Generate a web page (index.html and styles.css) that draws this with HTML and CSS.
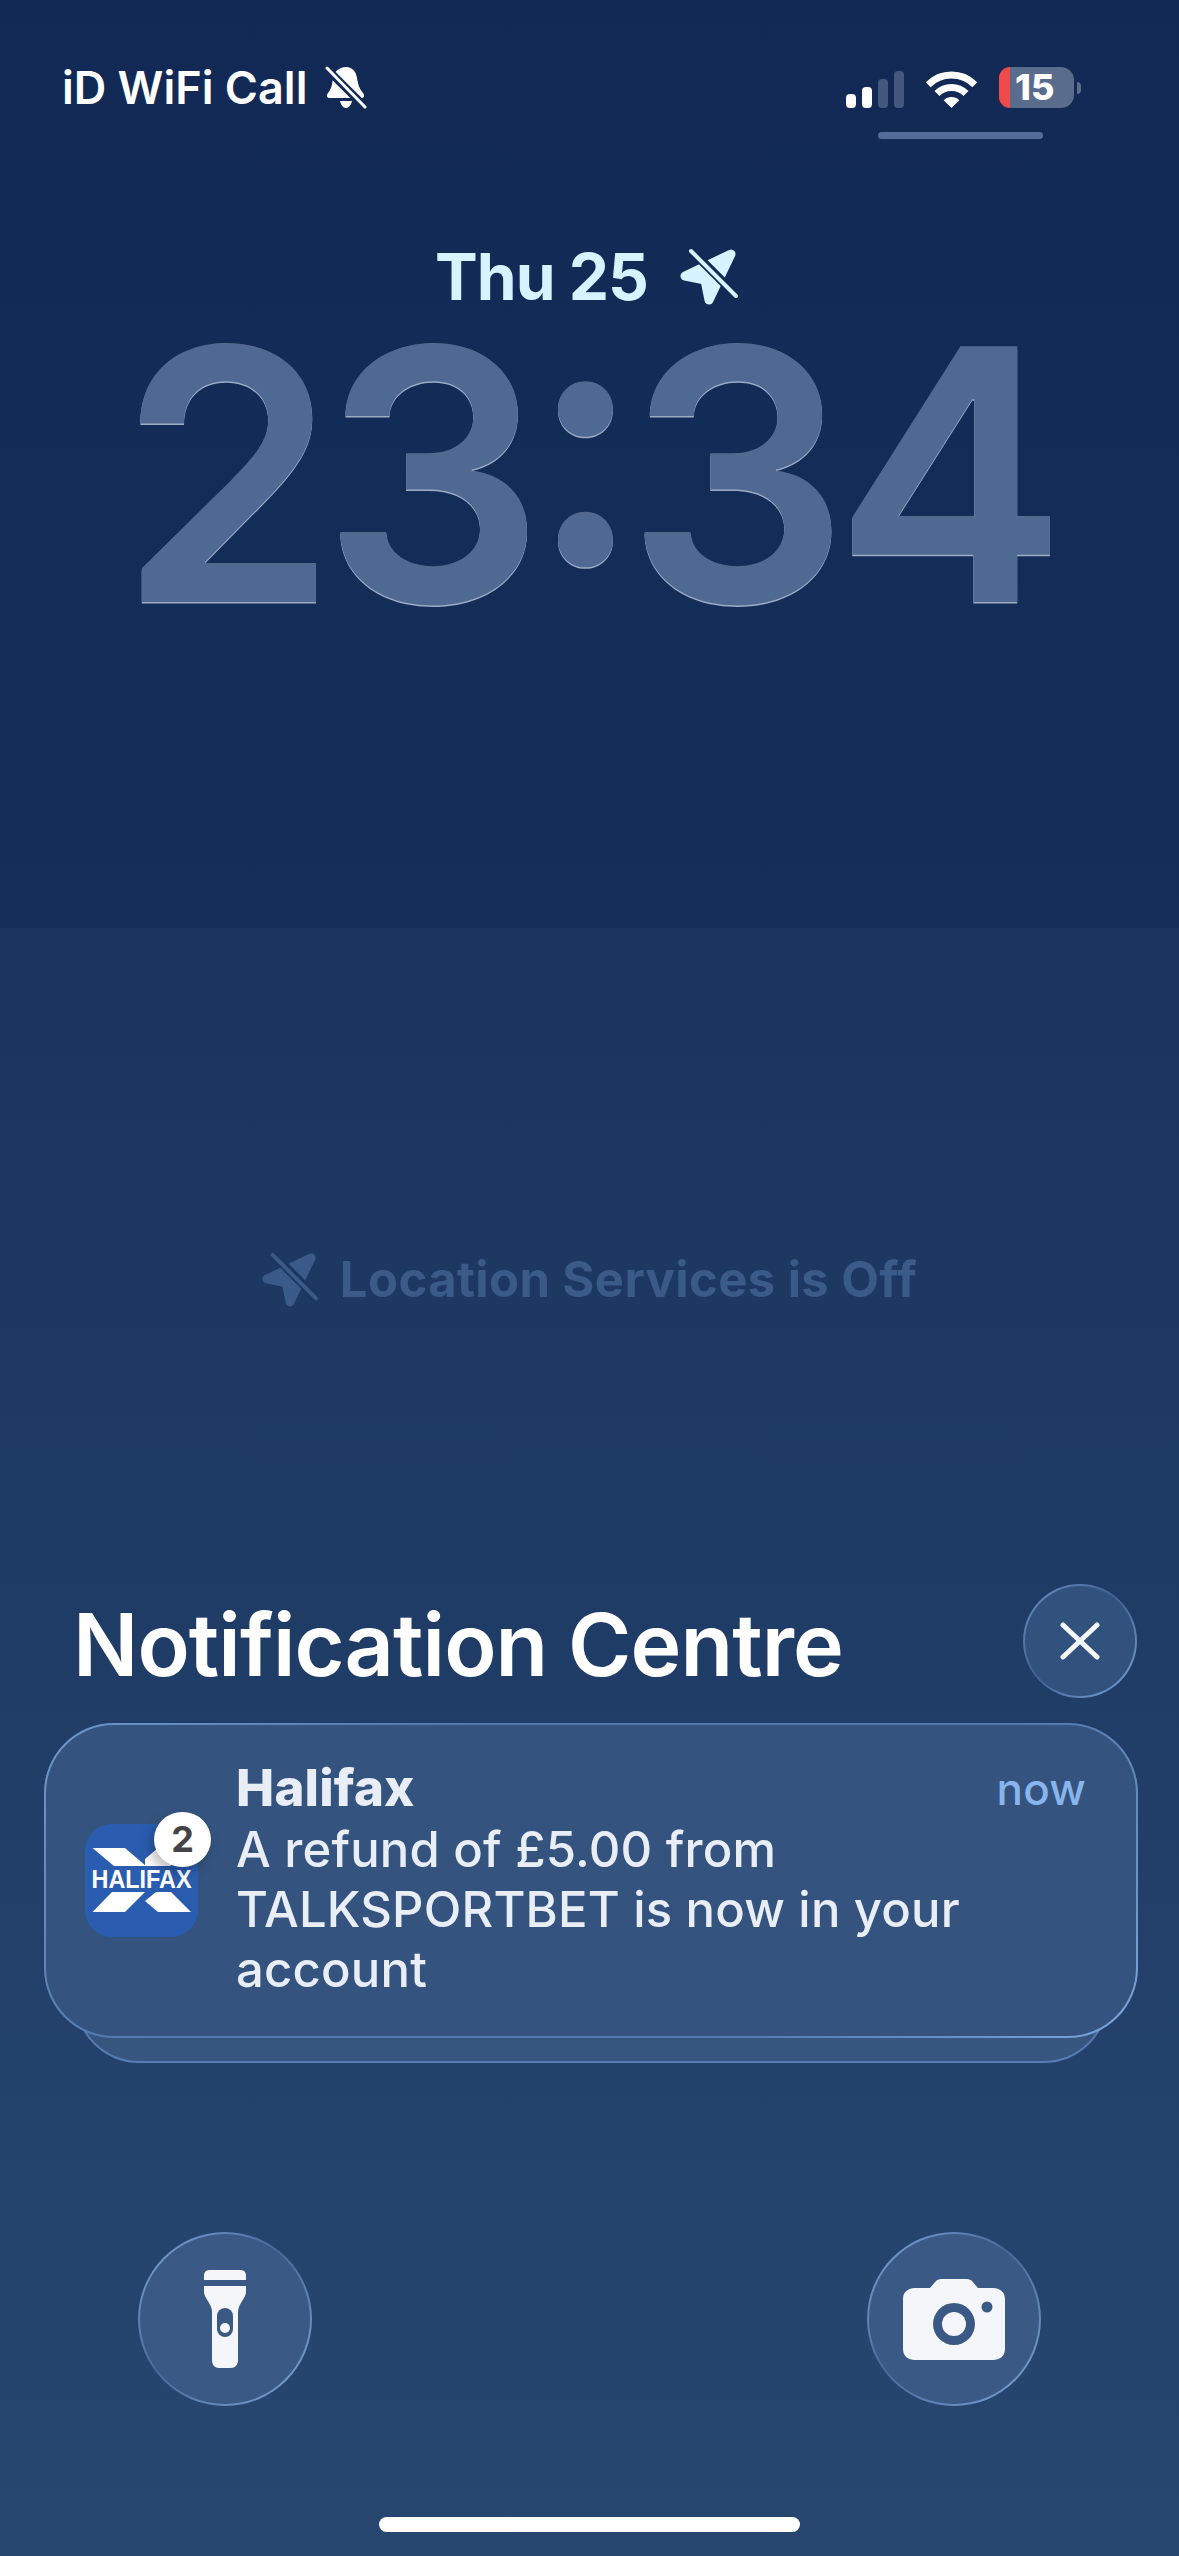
FILE: index.html
```html
<!DOCTYPE html>
<html lang="en">
<head>
  <meta charset="UTF-8" />
  <meta name="viewport" content="width=device-width, initial-scale=1.0"/>
  <title>Lock Screen</title>
  <link rel="stylesheet" href="styles.css">
</head>
<body>
  <main class="screen">

    <header class="status-bar">
      <div class="carrier">
        <span>iD WiFi Call</span>
        <svg class="bell-icon" viewBox="0 0 42 43">
          <path class="glyph" d="M21 1c6 0 10 4 11 11 1 6 2 10 6 15 2 3 1 5-2 5H5c-3 0-4-2-2-5 4-5 4-9 5-15C9 5 15 1 21 1z"/>
          <path class="glyph" d="M15 35h12c-1 4-3 7-6 7s-5-3-6-7z"/>
          <line class="cut" x1="1" y1="2" x2="41" y2="42"/>
          <line class="slash" x1="2" y1="2" x2="40" y2="41"/>
        </svg>
      </div>
      <div class="status-icons">
        <div class="signal">
          <i class="bar bar-1"></i>
          <i class="bar bar-2"></i>
          <i class="bar bar-3 off"></i>
          <i class="bar bar-4 off"></i>
        </div>
        <svg class="wifi-icon" viewBox="0 0 51 37">
          <path d="M2.2 13.7A33 33 0 0 1 48.8 13.7" fill="none" stroke="#fff" stroke-width="7"/>
          <path d="M11 22.5A20.5 20.5 0 0 1 40 22.5" fill="none" stroke="#fff" stroke-width="7"/>
          <path d="M25.5 37L17.7 29.2A11 11 0 0 1 33.3 29.2Z" fill="#fff"/>
        </svg>
        <div class="battery">
          <div class="battery-body">
            <i class="battery-level"></i>
            <span>15</span>
          </div>
          <i class="battery-cap"></i>
        </div>
      </div>
    </header>
    <div class="status-pill"></div>

    <div class="date-row">
      <span>Thu 25</span>
      <svg class="arrow-icon" viewBox="0 0 58 58">
        <path class="arrow-fill" d="M51 6L5 28 25 32 29 52Z"/>
        <line class="arrow-cut" x1="6" y1="-3" x2="62" y2="53"/>
        <line class="arrow-slash" x1="11" y1="3" x2="56" y2="48"/>
      </svg>
    </div>
    <div class="clock">23:34</div>

    <div class="location-row">
      <svg class="arrow-icon small" viewBox="0 0 58 58">
        <path class="arrow-fill" d="M51 6L5 28 25 32 29 52Z"/>
        <line class="arrow-cut" x1="6" y1="-3" x2="62" y2="53"/>
        <line class="arrow-slash" x1="11" y1="3" x2="56" y2="48"/>
      </svg>
      <span>Location Services is Off</span>
    </div>

    <div class="centre-header">
      <h1>Notification Centre</h1>
      <div class="close-btn">
        <svg viewBox="0 0 40 38">
          <path d="M3 3L37 35M37 3L3 35" fill="none" stroke="#f5f7fa" stroke-width="5" stroke-linecap="round"/>
        </svg>
      </div>
    </div>

    <section class="stack">
      <div class="card-behind"></div>
      <div class="card">
        <div class="app-icon">
          <svg viewBox="0 0 113 113">
            <rect width="113" height="113" rx="27" fill="#2a5db0"/>
            <path d="M7.5 24H40L61 42H29Z" fill="#fff"/>
            <path d="M73 24H106L85 42H60L60 35Z" fill="#fff"/>
            <path d="M27 68H60L40 88H7.5Z" fill="#fff"/>
            <path d="M71 68H86L106 88H73L60 77Z" fill="#fff"/>
            <text class="logo-text" x="56.5" y="64" text-anchor="middle" textLength="100" lengthAdjust="spacingAndGlyphs">HALIFAX</text>
          </svg>
          <span class="badge">2</span>
        </div>
        <div class="card-text">
          <div class="card-head">
            <strong>Halifax</strong>
            <span class="card-time">now</span>
          </div>
          <p>A refund of £5.00 from TALKSPORTBET is now in your account</p>
        </div>
      </div>
    </section>

    <div class="actions">
      <div class="round-btn">
        <svg class="torch-icon" viewBox="0 0 42 98">
          <path class="glyph-soft" d="M0 10V6C0 2 2 0 6 0H36C40 0 42 2 42 6V10Z"/>
          <path class="glyph-soft" d="M0 16H42V22C42 28 34 34 34 42V90C34 95 31 98 27 98H15C11 98 8 95 8 90V42C8 34 0 28 0 22Z"/>
          <rect x="13" y="38" width="16" height="29" rx="8" fill="#3a5a85"/>
          <circle cx="21" cy="58" r="5" fill="#f4f6f9"/>
        </svg>
      </div>
      <div class="round-btn">
        <svg class="camera-icon" viewBox="0 0 102 81">
          <path class="glyph-soft" d="M12 9H27L33 2C34 1 36 0 38 0H64C66 0 68 1 69 2L75 9H90C97 9 102 13 102 20V70C102 77 97 81 90 81H12C5 81 0 77 0 70V20C0 13 5 9 12 9Z"/>
          <circle cx="51" cy="45" r="21" fill="#3a5a85"/>
          <circle cx="51" cy="45" r="12" fill="#f4f6f9"/>
          <circle cx="84" cy="28" r="5.5" fill="#3a5a85"/>
        </svg>
      </div>
    </div>

    <div class="home-bar"></div>
  </main>
</body>
</html>
```

FILE: styles.css
```css
* {
  box-sizing: border-box;
}

body {
  margin: 0;
  font-family: "Inter", "Noto Sans", sans-serif;
}

.screen {
  width: 1179px;
  height: 2556px;
  overflow: hidden;
  display: flex;
  flex-direction: column;
  padding-top: 66px;
  color: #fff;
  background: linear-gradient(#122955 0, #152e5a 928px, #19345f 928px, #274771 100%);
}

/* status bar */
.status-bar {
  display: flex;
  justify-content: space-between;
  align-items: center;
  height: 43px;
  padding: 0 98px 0 62px;
}

.carrier {
  display: flex;
  align-items: center;
  gap: 18px;
  font-size: 45px;
  font-weight: 600;
  line-height: 43px;
}

.bell-icon {
  width: 42px;
  height: 43px;
}

.glyph {
  fill: #fff;
}

.cut {
  stroke: #132a56;
  stroke-width: 8;
}

.slash {
  stroke: #fff;
  stroke-width: 3;
  stroke-linecap: round;
}

.status-icons {
  display: flex;
  align-items: center;
  gap: 22px;
}

.signal {
  display: flex;
  align-items: flex-end;
  gap: 6px;
  height: 37px;
  margin-top: 3px;
}

.bar {
  display: block;
  width: 10px;
  border-radius: 4px;
  background: #fff;
}

.bar-1 { height: 14px; }
.bar-2 { height: 21px; }
.bar-3 { height: 29px; }
.bar-4 { height: 37px; }

.bar.off {
  background: #43587d;
}

.wifi-icon {
  width: 51px;
  height: 37px;
  margin-top: 3px;
}

.battery {
  display: flex;
  align-items: center;
  gap: 3px;
}

.battery-body {
  position: relative;
  width: 75px;
  height: 41px;
  border-radius: 13px;
  background: #5a6c8c;
  font-size: 36px;
  font-weight: 800;
  line-height: 41px;
  padding-left: 16px;
}

.battery-level {
  position: absolute;
  left: 0;
  top: 0;
  width: 11px;
  height: 100%;
  border-radius: 13px 0 0 13px;
  background: #ef4b4b;
}

.battery-body span {
  position: relative;
}

.battery-cap {
  display: block;
  width: 4px;
  height: 12px;
  border-radius: 0 6px 6px 0;
  background: #5a6c8c;
}

.status-pill {
  align-self: flex-end;
  width: 165px;
  height: 7px;
  margin: 23px 136px 0 0;
  border-radius: 4px;
  background: #536c99;
}

/* date and time */
.date-row {
  display: flex;
  justify-content: center;
  align-items: center;
  gap: 32px;
  height: 64px;
  margin-top: 106px;
  padding-right: 6px;
  font-size: 64px;
  font-weight: 700;
  letter-spacing: -1px;
  line-height: 64px;
  color: #d6f3ff;
}

.arrow-icon {
  width: 58px;
  height: 58px;
  flex: none;
}

.arrow-icon.small {
  width: 56px;
  height: 56px;
}

.arrow-fill {
  fill: #d6f3ff;
  stroke: #d6f3ff;
  stroke-width: 9;
  stroke-linejoin: round;
}

.arrow-cut {
  stroke: #132a56;
  stroke-width: 9;
}

.arrow-slash {
  stroke: #d6f3ff;
  stroke-width: 4;
  stroke-linecap: round;
}

.clock {
  height: 260px;
  margin-top: 36px;
  padding-right: 8px;
  text-align: center;
  font-size: 350px;
  font-weight: 620;
  font-feature-settings: "case" 1;
  letter-spacing: -15px;
  line-height: 260px;
  color: #4f6993;
  text-shadow: 0 1.5px 0 rgba(215, 228, 245, 0.7), 0 -1px 0 rgba(205, 220, 240, 0.35);
}

/* location */
.location-row {
  display: flex;
  justify-content: center;
  align-items: center;
  gap: 22px;
  height: 60px;
  margin-top: 645px;
  font-size: 49px;
  font-weight: 700;
  letter-spacing: 0.4px;
  line-height: 60px;
  color: #3a5a88;
}

.location-row .arrow-fill {
  fill: #3a5a88;
  stroke: #3a5a88;
}

.location-row .arrow-cut {
  stroke: #1b375f;
}

.location-row .arrow-slash {
  stroke: #3a5a88;
}

/* notification centre */
.centre-header {
  display: flex;
  justify-content: space-between;
  align-items: flex-start;
  height: 114px;
  margin-top: 274px;
  padding: 0 42px 0 73px;
}

.centre-header h1 {
  margin: 8px 0 0;
  font-size: 86px;
  font-weight: 600;
  letter-spacing: -0.9px;
  line-height: 106px;
}

.close-btn,
.round-btn {
  display: flex;
  justify-content: center;
  align-items: center;
  border: 2px solid transparent;
  border-radius: 50%;
}

.close-btn {
  width: 114px;
  height: 114px;
  background: linear-gradient(#32527e, #32527e) padding-box,
    linear-gradient(135deg, #6d95c8, #3f6090 45%, #7aa4da) border-box;
}

.close-btn svg {
  width: 40px;
  height: 38px;
}

.stack {
  position: relative;
  height: 315px;
  margin: 25px 41px 0 44px;
}

.card,
.card-behind {
  border: 2px solid transparent;
}

.card-behind {
  position: absolute;
  left: 31px;
  right: 30px;
  bottom: -25px;
  height: 200px;
  border-radius: 64px;
  background: linear-gradient(#36567f, #36567f) padding-box,
    linear-gradient(#4a6d9f, #567cb0) border-box;
}

.card {
  position: relative;
  display: flex;
  align-items: center;
  gap: 38px;
  height: 315px;
  padding: 0 50px 0 39px;
  border-radius: 70px;
  background: linear-gradient(#34547f, #34547f) padding-box,
    linear-gradient(135deg, #6f97ca, #5378ab 30%, #5378ab 70%, #7ba5dc) border-box;
}

.app-icon {
  position: relative;
  width: 113px;
  height: 113px;
  flex: none;
}

.app-icon svg {
  display: block;
  width: 113px;
  height: 113px;
}

.logo-text {
  font-family: "Liberation Sans", Arial, sans-serif;
  font-size: 25px;
  font-weight: 700;
  fill: #fff;
}

.badge {
  position: absolute;
  top: -12px;
  right: -13px;
  width: 57px;
  height: 55px;
  border-radius: 50%;
  background: #fff;
  box-shadow: -4px 6px 12px rgba(0, 0, 0, 0.25);
  text-align: center;
  font-size: 36px;
  font-weight: 700;
  line-height: 55px;
  color: #444;
}

.card-text {
  flex: 1;
  padding-bottom: 4px;
  font-size: 49px;
  font-weight: 500;
  letter-spacing: 0.2px;
  line-height: 60px;
  color: #e9edf5;
}

.card-head {
  display: flex;
  justify-content: space-between;
  margin-bottom: 2px;
}

.card-head strong {
  font-size: 51px;
  font-weight: 800;
}

.card-time {
  margin: 1px 0 -1px;
  font-size: 44px;
  font-weight: 500;
  color: #8ab4ec;
}

.card-text p {
  margin: 0;
}

/* bottom buttons */
.actions {
  display: flex;
  justify-content: space-between;
  margin-top: 194px;
  padding: 0 138px;
}

.round-btn {
  width: 174px;
  height: 174px;
  background: linear-gradient(#3a5a85, #3a5a85) padding-box,
    linear-gradient(135deg, #7fa6d8, #48699a 45%, #7fa6d8) border-box;
}

.torch-icon {
  width: 42px;
  height: 98px;
}

.camera-icon {
  width: 102px;
  height: 81px;
}

.glyph-soft {
  fill: #f4f6f9;
}

.home-bar {
  align-self: center;
  width: 421px;
  height: 15px;
  margin-top: 111px;
  border-radius: 8px;
  background: #fff;
}
```
